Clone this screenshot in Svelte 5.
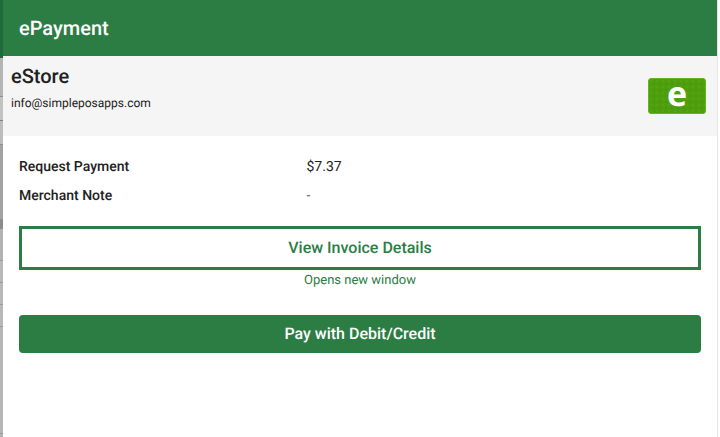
<script lang="ts">
  // backdrop peeking out to the left of the modal
  const strip = [
    { h: 58, c: '#1f6b39' }, { h: 38, c: '#b4b4b4' }, { h: 1, c: '#8e8e8e' },
    { h: 23, c: '#c2c2c2' }, { h: 1, c: '#7e7e7e' }, { h: 23, c: '#bcbcbc' },
    { h: 1, c: '#8e8e8e' }, { h: 74, c: '#a2a2a2' }, { h: 10, c: '#8c8c8c' },
    { h: 31, c: '#b2b2b2' }, { h: 1, c: '#9a9a9a' }, { h: 21, c: '#b8b8b8' },
    { h: 1, c: '#9a9a9a' }, { h: 21, c: '#b8b8b8' }, { h: 1, c: '#9a9a9a' },
    { h: 21, c: '#b8b8b8' }, { h: 1, c: '#9a9a9a' }, { h: 106, c: '#b6b6b6' },
    { h: 1, c: '#9a9a9a' }, { h: 3, c: '#b6b6b6' }
  ];
</script>

<div class="page">
  <div class="strip">
    {#each strip as s}
      <div style="height:{s.h}px;background:{s.c}"></div>
    {/each}
  </div>

  <div class="modal">
    <header class="title">ePayment</header>

    <section class="merchant">
      <div class="who">
        <h2>eStore</h2>
        <p>info@simpleposapps.com</p>
      </div>
      <div class="logo">e</div>
    </section>

    <section class="body">
      <div class="row first">
        <span class="label">Request Payment</span>
        <span class="value">$7.37</span>
      </div>
      <div class="row">
        <span class="label">Merchant Note</span>
        <span class="value muted">-</span>
      </div>

      <button class="outline">View Invoice Details</button>
      <div class="hint">Opens new window</div>
      <button class="solid">Pay with Debit/Credit</button>
    </section>
  </div>

  <div class="edge"></div>
</div>

<style>
  :global(body) { margin: 0; background: #fff; }
  .page {
    display: flex; width: 720px; height: 437px; overflow: hidden;
    font-family: Roboto, "Liberation Sans", sans-serif; color: #212121;
    text-rendering: geometricPrecision;
  }
  .strip { width: 3px; flex: none; }
  .modal { width: 714px; flex: none; background: #fff; }
  .edge { width: 1px; flex: none; background: #e6e6e6; }

  .title {
    height: 56px; box-sizing: border-box; padding: 16px 0 0 16px;
    background: #2b7d43; color: #fff; font-size: 20px; line-height: 24px;
    font-weight: 500;
  }

  .merchant {
    height: 80px; box-sizing: border-box; background: #f5f5f5;
    display: flex; justify-content: space-between; padding: 8px 11px 0 8px;
  }
  h2 { margin: 0; font-size: 20px; line-height: 24px; font-weight: 500; }
  .who p { margin: 8px 0 0; font-size: 12px; line-height: 14px; }
  .logo {
    width: 58px; height: 36px; margin-top: 14px; box-sizing: border-box;
    border: 1px solid #62b51d; border-radius: 3px; background-color: #4f9f0d;
    background-image:
      radial-gradient(circle at 2px 2px, #55a415 1px, transparent 1.5px),
      radial-gradient(circle at 5px 5px, #4a980b 1px, transparent 1.5px);
    background-size: 6px 6px;
    color: #fff; font: 700 34px/29px "Open Sans", sans-serif; text-align: center;
  }

  .body { padding: 0 16px; }
  .row { display: flex; height: 29px; align-items: center; font-size: 14px; }
  .row.first { margin-top: 16px; }
  .label { width: 287.5px; font-weight: 500; }
  .muted { color: #555; }

  button {
    display: block; width: 682px; box-sizing: border-box; padding: 0 0 2px;
    font-family: inherit; font-weight: 500; cursor: pointer; text-rendering: inherit;
  }
  .outline {
    height: 44px; margin-top: 16px; border: 3px solid #2b7d43; border-radius: 0;
    background: #fff; color: #2b7d43; font-size: 16px;
  }
  .hint {
    margin-top: 3px; width: 682px; text-align: center; color: #2b7d43;
    font-size: 13px; line-height: 16px;
  }
  .solid {
    height: 38px; margin-top: 26px; border: 0; border-radius: 4px;
    background: #2b7d43; color: #fff; font-size: 16px;
  }
</style>
